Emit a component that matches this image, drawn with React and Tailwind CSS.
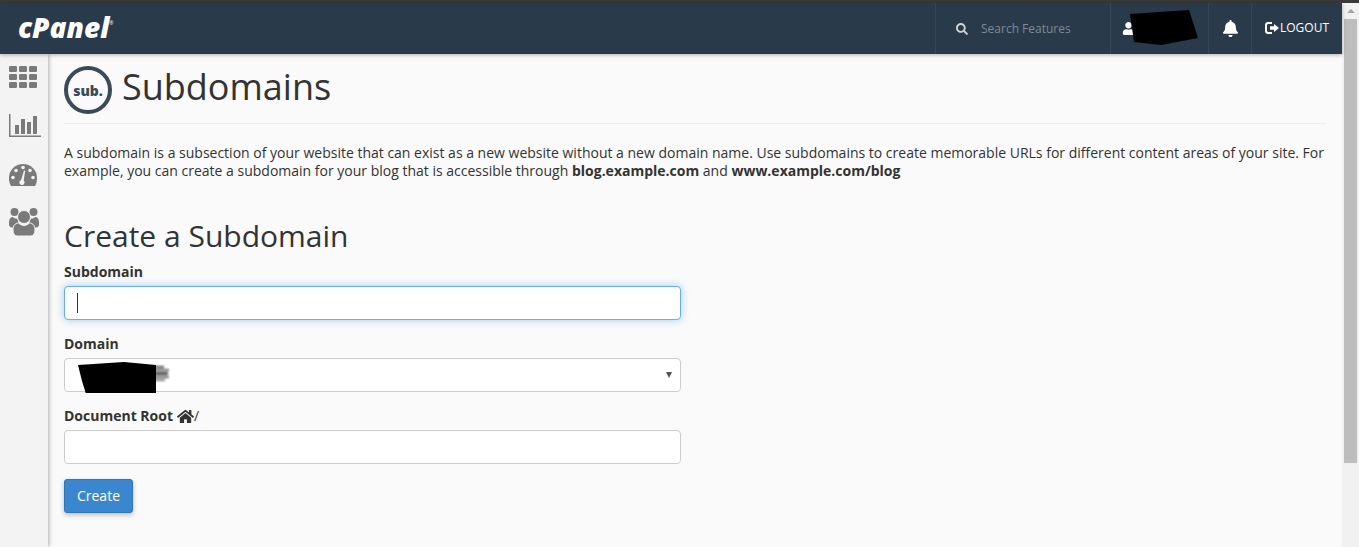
import React from 'react'
import { FaHome, FaBell, FaSearch, FaUser } from 'react-icons/fa'

function GridIcon() {
  const cells = []
  for (let r = 0; r < 3; r++) {
    for (let c = 0; c < 3; c++) {
      cells.push(<rect key={r + '-' + c} x={c * 10} y={r * 8} width="8" height="6" rx="1.2" />)
    }
  }
  return (
    <svg width="28" height="22" viewBox="0 0 28 22" fill="#7a7a7a">
      {cells}
    </svg>
  )
}

function BarsIcon() {
  return (
    <svg width="32" height="23" viewBox="0 0 32 23" fill="#7a7a7a">
      <rect x="0" y="0" width="1.500" height="23" />
      <rect x="0" y="21.500" width="32" height="1.500" />
      <rect x="6" y="11" width="4" height="9" />
      <rect x="12" y="5" width="4" height="15" />
      <rect x="18" y="8" width="4" height="12" />
      <rect x="24" y="2" width="4" height="18" />
    </svg>
  )
}

function GaugeIcon() {
  return (
    <svg width="28" height="22" viewBox="0 0 28 22">
      <path d="M2 22C0.500 19.500 0 17 0 14A14 14 0 0 1 28 14C28 17 27.500 19.500 26 22Z" fill="#7a7a7a" />
      <g fill="#f3f3f3">
        <circle cx="14" cy="3.500" r="1.800" />
        <circle cx="7" cy="6.500" r="1.800" />
        <circle cx="21" cy="6.500" r="1.800" />
        <circle cx="4" cy="13.500" r="1.800" />
        <circle cx="24" cy="13.500" r="1.800" />
        <path d="M15 6.500l1.200 0.300-1.500 9.700a2.600 2.600 0 1 1-2.600-0.500z" />
      </g>
    </svg>
  )
}

function GroupIcon() {
  return (
    <svg width="30" height="28" viewBox="0 0 30 28" fill="#7a7a7a">
      <circle cx="5.500" cy="4" r="4" />
      <circle cx="24.500" cy="4" r="4" />
      <path d="M0 14c0-3 1.500-5 4-5 1 1 2 1.500 3.500 1.500 1 0 2 3 2 5 0 1-1 3-2 4H3c-2 0-3-1.500-3-3z" />
      <path d="M30 14c0-3-1.500-5-4-5-1 1-2 1.500-3.500 1.500-1 0-2 3-2 5 0 1 1 3 2 4H27c2 0 3-1.500 3-3z" />
      <circle cx="15" cy="9" r="6.500" stroke="#f3f3f3" strokeWidth="1" />
      <path d="M4 22c0-4 2-7 5.500-7 1.500 1.500 3.500 2.500 5.500 2.500s4-1 5.500-2.500C24 15 26 18 26 22c0 4-2 6-4.500 6h-13C6 28 4 26 4 22z" stroke="#f3f3f3" strokeWidth="1" />
    </svg>
  )
}

function LogoutIcon() {
  return (
    <svg width="14" height="12" viewBox="0 0 14 12" fill="white">
      <path d="M3 0h4v2H3.500C2.600 2 2 2.600 2 3.500v5C2 9.400 2.600 10 3.500 10H7v2H3C1.300 12 0 10.700 0 9V3C0 1.300 1.300 0 3 0z" />
      <path d="M9 2l5 4-5 4V7.800H5V4.200h4z" />
    </svg>
  )
}

function Label({ children }) {
  return <label className="block text-sm font-bold leading-5 text-[#333]">{children}</label>
}

export default function App() {
  return (
    <div className="h-[547px] w-[1359px] overflow-hidden flex flex-col font-['Open_Sans',sans-serif] text-[#333] bg-[#fafafa]">
      <div className="h-[3px] bg-[#3a3a3a] shrink-0" />
      <div className="flex flex-1 min-h-0">
        <div className="flex-1 flex flex-col min-w-0">
          <header className="h-[51px] shrink-0 bg-[#293a4a] flex items-stretch justify-between shadow-[0_1px_4px_rgba(0,0,0,0.3)] z-20">
            <div className="pl-[18px] pt-[8px] text-white text-[28px] leading-[32px] font-extrabold italic whitespace-nowrap">
              cPanel<sup className="text-[5px] align-super not-italic font-normal">®</sup>
            </div>
            <div className="flex items-stretch">
              <div className="w-[175px] border-l border-[#33465a] flex items-center pl-5 gap-[13px]">
                <FaSearch className="text-[#ccd1d6] text-[12px]" />
                <span className="text-xs text-[#7f8a95]">Search Features</span>
              </div>
              <div className="relative w-[98px] border-l border-[#33465a] flex items-center pl-[11px]">
                <FaUser className="text-white text-[13px]" />
                <svg className="absolute left-[19px] top-[7px]" width="68" height="35" viewBox="0 0 68 35" fill="#000">
                  <path d="M0 4L59 0L68 28L31 35L4 32Z" />
                </svg>
              </div>
              <div className="w-[43px] border-l border-[#33465a] flex items-center justify-center">
                <FaBell className="text-white text-[17px]" />
              </div>
              <div className="w-[91px] border-l border-[#33465a] flex items-center pl-[13px] pb-[2px] gap-[1px] text-white text-xs">
                <LogoutIcon />
                <span>LOGOUT</span>
              </div>
            </div>
          </header>

          <div className="flex flex-1 min-h-0">
            <aside className="w-[48px] shrink-0 bg-[#f3f3f3] shadow-[1px_0_4px_rgba(0,0,0,0.3)] z-10 flex flex-col items-start pl-[9px] pt-[12px]">
              <GridIcon />
              <div className="mt-[26px]"><BarsIcon /></div>
              <div className="mt-[27px]"><GaugeIcon /></div>
              <div className="mt-[22px]"><GroupIcon /></div>
            </aside>

            <main className="flex-1 min-w-0 px-4 pt-3">
              <div className="flex items-center gap-[10px] pb-[9px] border-b border-[#eee]">
                <div className="w-12 h-12 rounded-full border-[4px] border-[#3a4a57] flex items-center justify-center text-[14px] font-extrabold text-[#3a4a57]">
                  sub.
                </div>
                <h1 className="text-[36px] leading-[40px] font-normal pb-[6px]">Subdomains</h1>
              </div>

              <p className="mt-5 text-sm leading-[18px]">
                A subdomain is a subsection of your website that can exist as a new website without a new domain name. Use subdomains to create memorable URLs for different content areas of your site. For example, you can create a subdomain for your blog that is accessible through <b>blog.example.com</b> and <b>www.example.com/blog</b>
              </p>

              <h2 className="mt-[39px] text-[30px] leading-[33px] font-normal">Create a Subdomain</h2>

              <form className="mt-[10px] w-[617px]">
                <Label>Subdomain</Label>
                <div className="relative mt-[4px]">
                  <input
                    type="text"
                    className="block w-full h-[34px] rounded border border-[#66afe9] bg-white px-3 text-sm outline-none shadow-[0_0_8px_rgba(102,175,233,0.6)]"
                  />
                  <div className="absolute left-[13px] top-[7px] w-px h-[20px] bg-[#333]" />
                </div>

                <div className="mt-[14px]"><Label>Domain</Label></div>
                <div className="relative mt-[4px]">
                  <select className="block w-full h-[34px] rounded border border-[#ccc] bg-white px-3 text-sm outline-none appearance-none">
                    <option></option>
                  </select>
                  <div className="absolute right-[9px] top-[14px] w-0 h-0 border-x-[3px] border-x-transparent border-t-[6px] border-t-[#555]" />
                  <svg className="absolute left-[14px] top-[3px]" width="92" height="32" viewBox="0 0 92 32" fill="#000">
                    <g className="blur-[1px]">
                      <rect x="76" y="5" width="10" height="2" opacity="0.7" />
                      <rect x="76" y="8" width="15" height="2" opacity="0.6" />
                      <rect x="76" y="11" width="14" height="3" opacity="0.7" />
                      <rect x="76" y="15" width="15" height="2" opacity="0.6" />
                      <rect x="76" y="18" width="11" height="2" opacity="0.5" />
                    </g>
                    <path d="M0 4L46 1L78 4L78 32L34 32L8 33L4 20Z" />
                  </svg>
                </div>

                <div className="mt-[14px]">
                  <Label>
                    <span className="inline-flex items-center">
                      Document Root
                      <FaHome className="ml-1 text-[#333] text-[17px]" />
                      <span className="font-normal">/</span>
                    </span>
                  </Label>
                </div>
                <input
                  type="text"
                  className="block mt-[4px] w-full h-[34px] rounded border border-[#ccc] bg-white px-3 text-sm outline-none"
                />

                <button
                  type="button"
                  className="mt-[15px] block w-[69px] h-[34px] rounded-[3px] border border-[#2f77bb] bg-[#3a87d0] text-white text-sm shadow-[0_2px_5px_rgba(0,0,0,0.25)]"
                >
                  Create
                </button>
              </form>
            </main>
          </div>
        </div>

        <div className="w-[17px] shrink-0 bg-[#f1f1f1] flex flex-col items-center">
          <div className="h-4 flex items-center justify-center">
            <div className="w-0 h-0 border-x-[4px] border-x-transparent border-b-[4px] border-b-[#a3a3a3]" />
          </div>
          <div className="w-[13px] h-[444px] bg-[#bdbdbd]" />
        </div>
      </div>
    </div>
  )
}
